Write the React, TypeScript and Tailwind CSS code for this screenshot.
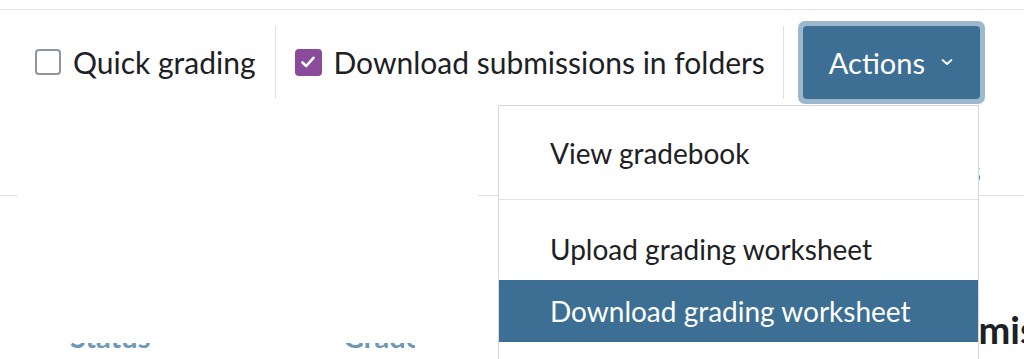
import React from "react";

export default function App() {
  return (
    <div className="relative w-[1024px] h-[359px] overflow-hidden bg-white text-[#1d2125] font-['Lato','Liberation_Sans',sans-serif]">
      <div className="h-[9px]" />
      <div className="border-t border-[#dee2e6]" />
      {/* toolbar */}
      <div className="flex items-center pl-[35px] pt-[13px] h-[91px]">
        <div className="shrink-0 w-[26px] h-[26px] rounded-[4px] border-2 border-[#8f959e] bg-white" />
        <span className="ml-[12px] text-[30px] leading-none whitespace-nowrap">Quick grading</span>
        <div className="shrink-0 ml-[19px] w-px h-[73px] bg-[#dee2e6]" />
        <div className="shrink-0 ml-[19px] w-[27px] h-[27px] rounded-[4px] bg-[#8a4b9c] flex items-center justify-center">
          <svg width="18" height="18" viewBox="0 0 18 18" fill="none">
            <path d="M3.5 9.5 L7.2 13 L14.5 4.8" stroke="white" strokeWidth="2.6" strokeLinecap="round" strokeLinejoin="round" />
          </svg>
        </div>
        <span className="ml-[12px] text-[30px] leading-none whitespace-nowrap">Download submissions in folders</span>
        <div className="shrink-0 ml-[18px] w-px h-[73px] bg-[#dee2e6]" />
        <div className="shrink-0 ml-[14px] rounded-[7px] p-[5px] bg-[#9bb8cd]">
          <div className="w-[177px] h-[73px] rounded-[4px] bg-[#3d6f94] flex items-center pl-[26px] text-white">
            <span className="text-[29px] leading-none">Actions</span>
            <svg className="ml-[15px]" width="14" height="10" viewBox="0 0 14 10" fill="none">
              <path d="M2.5 3 L7 7 L11.5 3" stroke="white" strokeWidth="1.8" strokeLinecap="round" strokeLinejoin="round" />
            </svg>
          </div>
        </div>
      </div>
      {/* link row */}
      <div className="flex justify-end pr-[43px] mt-[56px] h-[30px]">
        <span className="text-[28px] leading-none text-[#3d6f94]">Options</span>
      </div>
      {/* divider line */}
      <div className="flex mt-[8px]">
        <div className="w-[17px] border-t border-[#dee2e6]" />
        <div className="ml-[461px] flex-1 border-t border-[#dee2e6]" />
      </div>
      {/* lower content */}
      <div className="flex items-start">
        <div className="shrink-0 ml-[70px] w-[80px] mt-[147px] h-[5px] overflow-hidden">
          <div className="-mt-[21px] text-[29px] font-bold leading-none text-[#6f97b8] whitespace-nowrap">Status</div>
        </div>
        <div className="shrink-0 ml-[193px] w-[72px] mt-[147px] h-[5px] overflow-hidden">
          <div className="-mt-[21px] text-[29px] font-bold leading-none text-[#6f97b8] whitespace-nowrap">Grade</div>
        </div>
        <span className="shrink-0 ml-[500px] mt-[114px] text-[38px] font-bold leading-none text-[#1d2125] whitespace-nowrap">Submissions</span>
      </div>

      {/* dropdown menu */}
      <div className="absolute left-[498px] top-[105px] w-[481px] h-[300px] bg-white border border-[#d6d8da]">
        <div className="h-[16px]" />
        <div className="h-[62px] flex items-center pl-[51px] text-[28px] leading-none">View gradebook</div>
        <div className="mt-[15px] border-t border-[#dee2e6]" />
        <div className="mt-[18px] h-[62px] flex items-center pl-[51px] text-[28px] leading-none">Upload grading worksheet</div>
        <div className="h-[62px] flex items-center pl-[51px] text-[28px] leading-none bg-[#3d6f94] text-white">Download grading worksheet</div>
      </div>
    </div>
  );
}
